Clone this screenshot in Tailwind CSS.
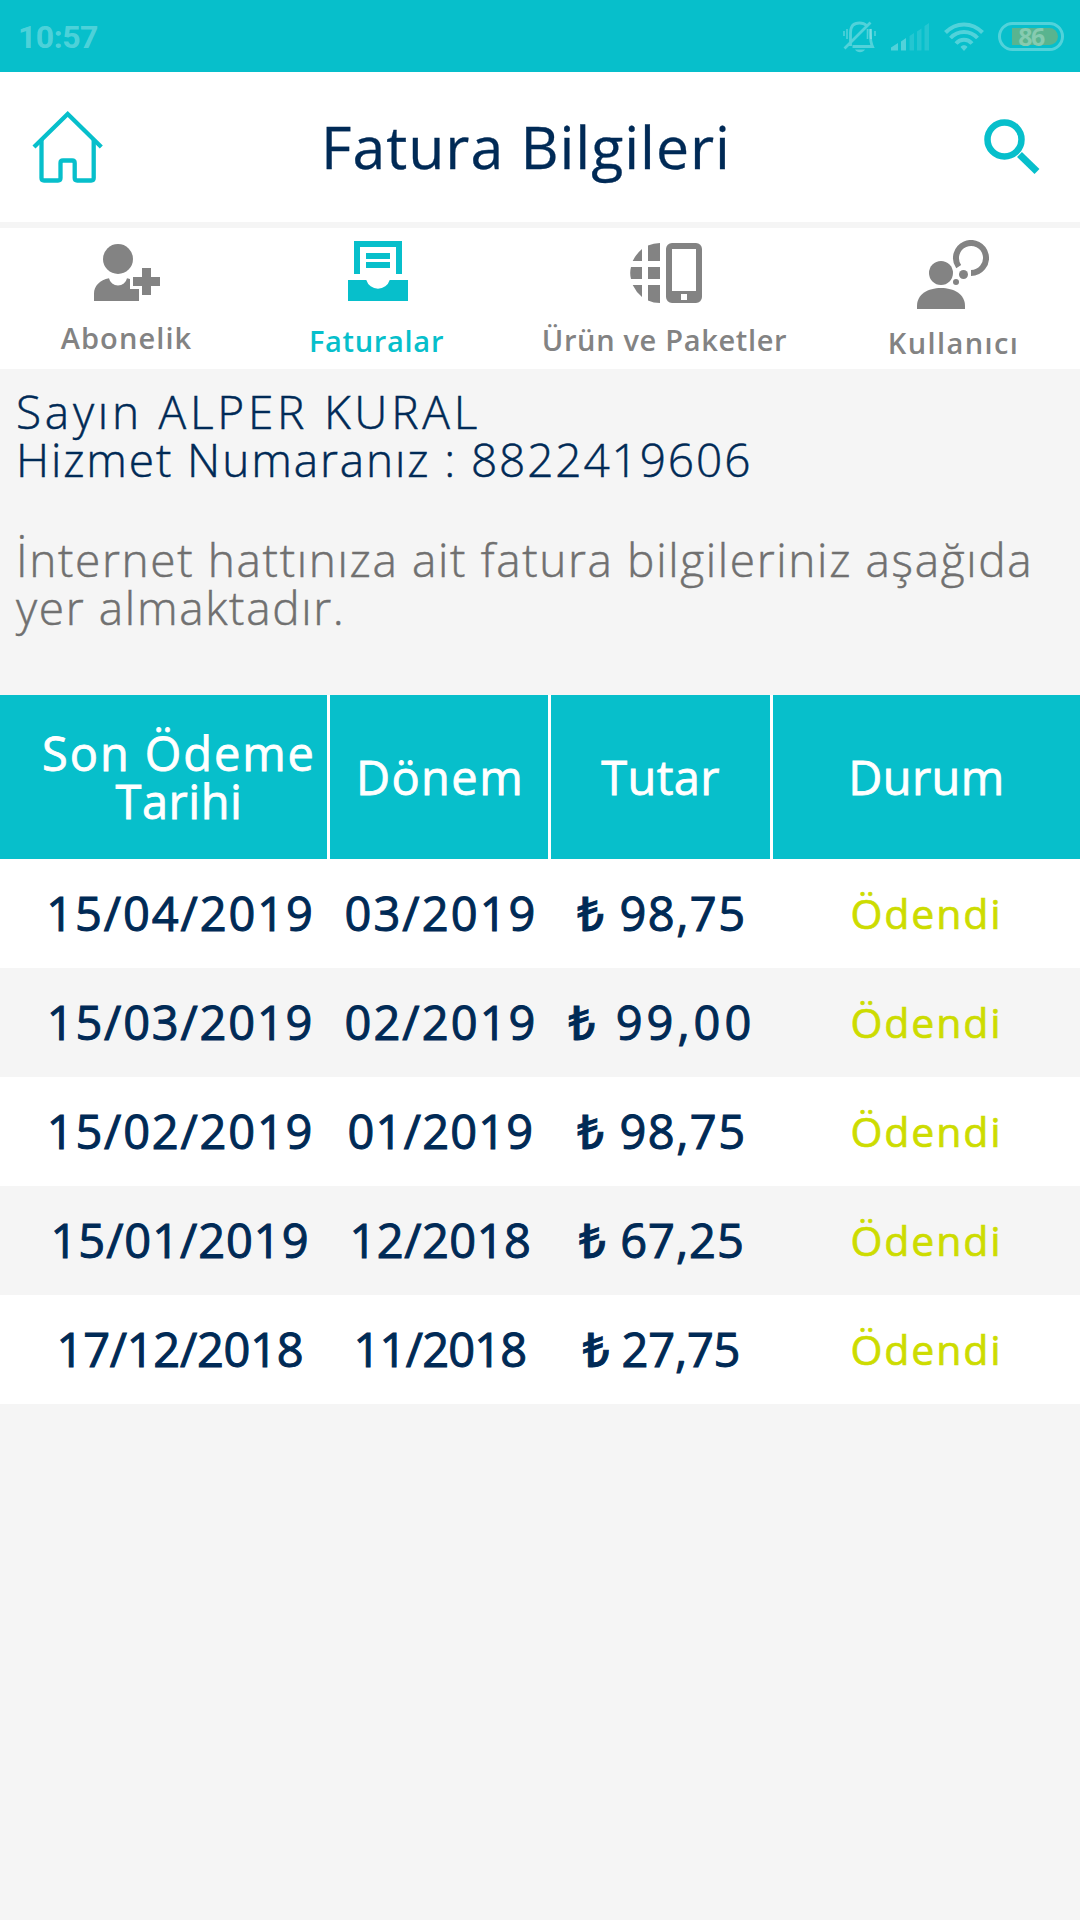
<!DOCTYPE html>
<html lang="tr">
  <head>
    <meta charset="UTF-8" />
    <meta name="viewport" content="width=device-width, initial-scale=1.0" />
    <title>Fatura Bilgileri</title>
    <script src="https://cdn.jsdelivr.net/npm/@tailwindcss/browser@4"></script>
  </head>
  <body class="bg-[#f5f5f5] font-['Open_Sans','Noto_Sans',sans-serif]">
    <div class="w-[1080px] h-[1920px] overflow-hidden">
      <!-- status bar -->
      <div class="h-[72px] bg-[#07bfcb] flex items-center justify-between pl-[18px] pr-4">
        <span class="font-['Roboto',sans-serif] font-bold text-[32px] leading-[40px] tracking-[-0.5px] text-white/30 pt-[2px]">10:57</span>
        <div class="flex items-center gap-[15px] pt-[1px]">
          <svg class="w-[33px] h-[32px]" viewBox="0 0 33 32" fill="none" stroke="#fff" stroke-opacity=".3">
            <path d="M7.500 25V12C7.500 5 11 2 16.500 2c3.500 0 5.500 1 7 2.500M27 8c.7 6-.5 11 2.500 17.500H9.500M1.500 27.500L27.500 1.500" stroke-width="2.800" />
            <path d="M1 10v5M4 8v10M24.500 8v10M28 8v10M32 10v5" stroke-width="1.600" />
            <path d="M12 28.500h10c-2 3.500-8 3.500-10 0z" fill="#fff" fill-opacity=".3" stroke="none" />
          </svg>
          <svg class="w-[38px] h-[28px]" viewBox="0 0 38 28" fill="#fff">
            <path d="M0 27.500v-3l7-4.500v7.500zM10 18.500l5-3.500v12.500h-5z" fill-opacity=".3" />
            <path d="M18.500 13l4.500-3v17.500h-4.500zM26 8.500L30.500 5.500v22H26zM33.500 3L38 0v27.500h-4.500z" fill-opacity=".12" />
          </svg>
          <svg class="w-[40px] h-[30px]" viewBox="0 0 40 30" fill="none" stroke="#fff" stroke-opacity=".3" stroke-width="4">
            <path d="M1.500 10.500C12-.3 28-.3 38.500 10.500M6.500 16C14 8 26 8 33.500 16M12 21.500c4.500-5 11.500-5 16 0" />
            <path d="M16.500 25c1.500-2.500 5.500-2.500 7 0L20 29z" fill="#fff" fill-opacity=".3" stroke="none" />
          </svg>
          <div class="relative -ml-px w-[66px] h-[29px] rounded-full border-[3px] border-white/30 flex items-center justify-center">
            <div class="absolute left-[11px] top-[3px] w-[46px] h-[17px] rounded-r-full bg-[#59b48f]"></div>
            <span class="relative font-['Open_Sans',sans-serif] font-bold text-[25px] leading-[23px] tracking-[-1.5px] text-[#86cbb0]">86</span>
          </div>
        </div>
      </div>

      <!-- title bar -->
      <header class="h-[150px] bg-white flex items-center justify-between pl-[32px] pr-[40px]">
        <svg class="w-[72px] h-[73px]" viewBox="0 0 72 73" fill="none" stroke="#07bfcb" stroke-width="4.300" stroke-linejoin="round">
          <path d="M2 36L35.700 3 69.300 36" stroke-linejoin="miter" />
          <path d="M9.500 29V67q0 2.500 2.500 2.500H26q2.500 0 2.500-2.500V52q0-2.500 2.500-2.500h9.200q2.500 0 2.500 2.500V67q0 2.500 2.500 2.500h14q2.500 0 2.500-2.500V29" />
        </svg>
        <h1 class="text-[59px] leading-[80px] tracking-[0.96px] text-[#002a56] -mt-[3px] pr-[36px] whitespace-nowrap [-webkit-text-stroke:0.3px_#002a56]">Fatura Bilgileri</h1>
        <svg class="w-[56px] h-[56px]" viewBox="0 0 56 56" fill="none" stroke="#07bfcb">
          <circle cx="20.500" cy="20.500" r="17" stroke-width="6.500" />
          <path d="M35.500 35.500L53 52.500" stroke-width="7" />
        </svg>
      </header>

      <!-- tabs -->
      <nav class="mt-[6px] h-[141px] bg-white grid grid-cols-[252px_250px_326px_252px] text-[29px] leading-[40px] font-semibold text-center text-[#838383] whitespace-nowrap">
        <a class="flex flex-col items-center pt-4">
          <svg class="w-[66px] h-[57px] ml-[2px]" viewBox="0 0 66 57" fill="currentColor">
            <circle cx="24" cy="15" r="15" />
            <path d="M0 57v-7.500C0 42 6 36 15 34.300a9.200 9.200 0 0 0 18 0l3 .7v10h9v12zM48 24h9v9h9v9h-9v9h-9v-9h-9v-9h9z" />
          </svg>
          <span class="mt-[17px] pl-px tracking-[1.1px]">Abonelik</span>
        </a>
        <a class="flex flex-col items-center pt-[13px] text-[#07bfcb]">
          <svg class="w-[60px] h-[60px] ml-[2px]" viewBox="0 0 60 60" fill="currentColor">
            <path d="M6 0h48v33h-6V6H12v27H6zM18 12h24v6H18zM18 21h24v6H18zM0 39h18.300a12.200 12.200 0 0 0 23.400 0H60v21H0z" />
          </svg>
          <span class="mt-[20px] pr-px tracking-[0.7px]">Faturalar</span>
        </a>
        <a class="flex flex-col items-center pt-[15px]">
          <svg class="w-[72px] h-[60px] ml-[2px]" viewBox="0 0 72 60" fill="currentColor">
            <path d="M12 6v12H2.700Q6 11 12 6zM18 2.500Q23.500 0 30 0v18H18zM1 24h11v12H1Q-.6 30 1 24zM18 24h12v12H18zM2.700 42H12v12Q6 49 2.700 42zM18 42h12v18q-6.500 0-12-2.500z" />
            <path fill-rule="evenodd" d="M42 0h24a6 6 0 0 1 6 6v48a6 6 0 0 1-6 6H42a6 6 0 0 1-6-6V6a6 6 0 0 1 6-6zM42 6v42h24V6zM51 51v6h6v-6z" />
          </svg>
          <span class="mt-[17px] pr-px tracking-[0.67px]">Ürün ve Paketler</span>
        </a>
        <a class="flex flex-col items-center pt-3">
          <svg class="w-[72px] h-[69px] mr-[2px]" viewBox="0 0 72 69" fill="currentColor">
            <circle cx="24" cy="33" r="12" />
            <path d="M0 69v-3c0-12 11-18 24-18s24 6 24 18v3z" />
            <circle cx="46.500" cy="34.500" r="4.500" />
            <circle cx="39" cy="42" r="3" />
            <path d="M54 33a15 15 0 1 0-12.300-6.400" fill="none" stroke="currentColor" stroke-width="6" />
          </svg>
          <span class="mt-[14px] pr-px tracking-[1.4px]">Kullanıcı</span>
        </a>
      </nav>

      <!-- customer info -->
      <section class="h-[326px] pt-[18px] pl-4 text-[46px] leading-[48px] font-light whitespace-nowrap">
        <div class="text-[#002a56] [-webkit-text-stroke:0.5px_#002a56]">
          <p class="tracking-[3.75px]">Sayın ALPER KURAL</p>
          <p class="tracking-[1.88px]">Hizmet Numaranız : 8822419606</p>
        </div>
        <div class="mt-[52px] text-[#707070] [-webkit-text-stroke:0.5px_#707070]">
          <p class="tracking-[1.64px]">İnternet hattınıza ait fatura bilgileriniz aşağıda</p>
          <p class="tracking-[1.65px]">yer almaktadır.</p>
        </div>
      </section>

      <!-- invoices -->
      <section class="text-center whitespace-nowrap text-[47px] leading-[48px] font-medium">
        <div class="h-[164px] grid grid-cols-[327px_218px_219px_307px] gap-[3px] bg-white text-white [-webkit-text-stroke:0.8px_white]">
          <div class="bg-[#07bfcb] flex flex-col items-center justify-center pl-[31px]">
            <span class="tracking-[1.9px]">Son Ödeme</span>
            <span class="tracking-[0.5px]">Tarihi</span>
          </div>
          <div class="bg-[#07bfcb] flex items-center justify-center pl-[2px] tracking-[1.4px]">Dönem</div>
          <div class="bg-[#07bfcb] flex items-center justify-center tracking-[0.35px]">Tutar</div>
          <div class="bg-[#07bfcb] flex items-center justify-center tracking-[0.4px]">Durum</div>
        </div>
        <div class="text-[#002a56] [-webkit-text-stroke:1px_#002a56]">
          <div class="h-[109px] pb-[2px] grid grid-cols-[330px_221px_222px_307px] items-center bg-white">
            <span class="pl-[31px] tracking-[1.9px]">15/04/2019</span>
            <span class="pl-px tracking-[2.1px]">03/2019</span>
            <span class="tracking-[1.5px]">₺ 98,75</span>
            <span class="text-[41px] tracking-[1.9px] text-[#cddc00] [-webkit-text-stroke:0.7px_#cddc00]">Ödendi</span>
          </div>
          <div class="h-[109px] pb-[2px] grid grid-cols-[330px_221px_222px_307px] items-center">
            <span class="pl-[31px] tracking-[1.8px]">15/03/2019</span>
            <span class="pl-px tracking-[2.1px]">02/2019</span>
            <span class="tracking-[4px]">₺ 99,00</span>
            <span class="text-[41px] tracking-[1.9px] text-[#cddc00] [-webkit-text-stroke:0.7px_#cddc00]">Ödendi</span>
          </div>
          <div class="h-[109px] pb-[2px] grid grid-cols-[330px_221px_222px_307px] items-center bg-white">
            <span class="pl-[31px] tracking-[1.8px]">15/02/2019</span>
            <span class="pl-px tracking-[1.2px]">01/2019</span>
            <span class="tracking-[1.5px]">₺ 98,75</span>
            <span class="text-[41px] tracking-[1.9px] text-[#cddc00] [-webkit-text-stroke:0.7px_#cddc00]">Ödendi</span>
          </div>
          <div class="h-[109px] pb-[2px] grid grid-cols-[330px_221px_222px_307px] items-center">
            <span class="pl-[30px] tracking-[0.95px]">15/01/2019</span>
            <span class="tracking-[0.5px]">12/2018</span>
            <span class="tracking-[1px]">₺ 67,25</span>
            <span class="text-[41px] tracking-[1.9px] text-[#cddc00] [-webkit-text-stroke:0.7px_#cddc00]">Ödendi</span>
          </div>
          <div class="h-[109px] pb-[2px] grid grid-cols-[330px_221px_222px_307px] items-center bg-white">
            <span class="pl-[30px] tracking-[-0.25px]">17/12/2018</span>
            <span class="pr-px tracking-[-0.8px]">11/2018</span>
            <span class="pr-px tracking-[-0.15px]">₺ 27,75</span>
            <span class="text-[41px] tracking-[1.9px] text-[#cddc00] [-webkit-text-stroke:0.7px_#cddc00]">Ödendi</span>
          </div>
        </div>
      </section>
    </div>
  </body>
</html>
